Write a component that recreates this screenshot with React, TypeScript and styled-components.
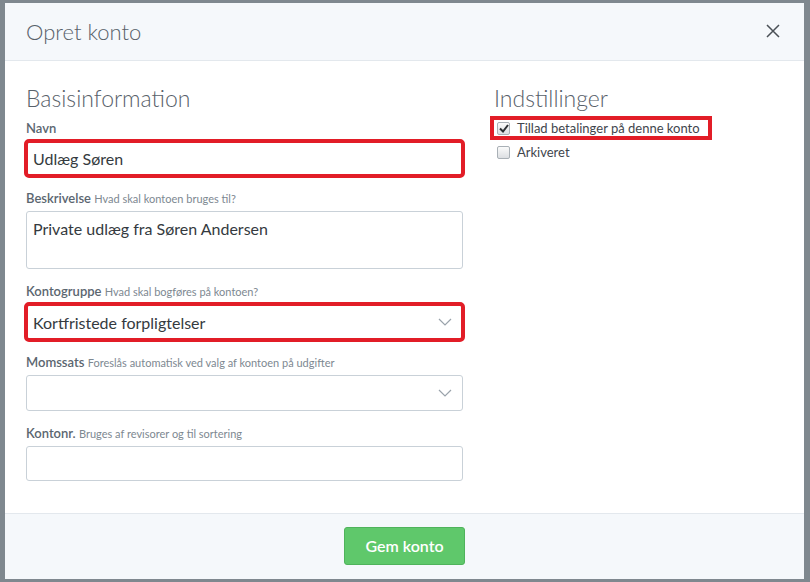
import React from 'react';
import styled, { createGlobalStyle } from 'styled-components';

const GlobalStyle = createGlobalStyle`
  html, body {
    margin: 0;
    padding: 0;
    background: #7f888f;
    font-family: Lato, "Open Sans", "Liberation Sans", sans-serif;
  }
  * { box-sizing: border-box; }
`;

const Backdrop = styled.div`
  width: 810px;
  height: 582px;
  padding: 3px 0 0 5px;
  overflow: hidden;
`;

const Modal = styled.div`
  width: 799px;
  height: 576px;
  background: #ffffff;
  display: flex;
  flex-direction: column;
`;

const Header = styled.div`
  height: 58px;
  background: #f5f8fb;
  border-bottom: 1px solid #e3e8ed;
  display: flex;
  align-items: center;
  justify-content: space-between;
  padding: 0 22px 0 21px;
`;

const Title = styled.h2`
  margin: 0;
  font-size: 22px;
  font-weight: 300;
  color: #58616a;
`;

const CloseButton = styled.button`
  background: none;
  border: none;
  padding: 0;
  width: 16px;
  height: 16px;
  cursor: pointer;
  display: flex;
`;

const Body = styled.div`
  flex: 1;
  display: flex;
  gap: 31px;
  padding: 22px 21px 0 21px;
`;

const LeftColumn = styled.div`
  width: 437px;
`;

const RightColumn = styled.div`
  flex: 1;
`;

const SectionTitle = styled.h3`
  margin: 0 0 6px;
  font-size: 23px;
  line-height: 30px;
  font-weight: 300;
  color: #58616a;
`;

const Group = styled.div`
  margin-bottom: 13px;
`;

const Label = styled.label`
  display: block;
  height: 18px;
  line-height: 18px;
  margin-bottom: 4px;
  font-size: 13px;
  font-weight: 600;
  color: #5b6670;
  white-space: nowrap;
`;

const Hint = styled.span`
  font-size: 11px;
  font-weight: 400;
  color: #7d8891;
`;

const fieldBase = `
  width: 100%;
  display: block;
  border: 1px solid #c9d1d8;
  border-radius: 3px;
  background: #fff;
  font-family: inherit;
  font-size: 16px;
  color: #343a40;
  padding: 0 6px;
`;

const Input = styled.input<{ $marked?: boolean }>`
  ${fieldBase}
  height: 35px;
  outline: ${p => (p.$marked ? '4px solid #e21d27' : 'none')};
  outline-offset: -2px;
`;

const TextArea = styled.textarea`
  ${fieldBase}
  height: 58px;
  padding-top: 7px;
  resize: none;
  outline: none;
`;

const SelectBox = styled.div<{ $marked?: boolean }>`
  ${fieldBase}
  height: 36px;
  display: flex;
  align-items: center;
  justify-content: space-between;
  padding: 0 10px 0 6px;
  outline: ${p => (p.$marked ? '4px solid #e21d27' : 'none')};
  outline-offset: -2px;
`;

const CheckList = styled.div`
  display: flex;
  flex-direction: column;
  align-items: flex-start;
  margin-top: -3px;
`;

const CheckRow = styled.label<{ $marked?: boolean }>`
  display: flex;
  align-items: center;
  gap: 7px;
  height: 24px;
  margin-left: -4px;
  padding: 0 12px 0 7px;
  font-size: 13px;
  color: #3f464d;
  white-space: nowrap;
  outline: ${p => (p.$marked ? '4px solid #e21d27' : 'none')};
  outline-offset: -4px;
`;

const CheckBox = styled.span`
  width: 13px;
  height: 13px;
  border: 1px solid #a9b0b6;
  border-radius: 2px;
  background: linear-gradient(#fbfbfb, #dcdfe2);
  display: flex;
  align-items: center;
  justify-content: center;
  flex-shrink: 0;
`;

const Footer = styled.div`
  height: 66px;
  background: #f5f8fb;
  border-top: 1px solid #e3e8ed;
  display: flex;
  align-items: center;
  justify-content: center;
  padding-bottom: 2px;
`;

const SaveButton = styled.button`
  width: 121px;
  height: 38px;
  background: #5fc86b;
  border: 1px solid #4fb35b;
  border-radius: 3px;
  color: #fff;
  font-family: inherit;
  font-size: 16px;
  font-weight: 600;
  cursor: pointer;
`;

const Chevron = () => (
  <svg width="14" height="8" viewBox="0 0 14 8">
    <path d="M1 1 L7 7 L13 1" fill="none" stroke="#9aa3ab" strokeWidth="1.2" />
  </svg>
);

const App: React.FC = () => (
  <>
    <GlobalStyle />
    <Backdrop>
      <Modal>
        <Header>
          <Title>Opret konto</Title>
          <CloseButton aria-label="Luk">
            <svg width="14" height="14" viewBox="0 0 14 14">
              <path d="M1 1 L13 13 M13 1 L1 13" stroke="#4a5056" strokeWidth="1.5" />
            </svg>
          </CloseButton>
        </Header>
        <Body>
          <LeftColumn>
            <SectionTitle>Basisinformation</SectionTitle>
            <Group>
              <Label>Navn</Label>
              <Input $marked defaultValue="Udlæg Søren" />
            </Group>
            <Group>
              <Label>
                Beskrivelse <Hint>Hvad skal kontoen bruges til?</Hint>
              </Label>
              <TextArea defaultValue="Private udlæg fra Søren Andersen" />
            </Group>
            <Group>
              <Label>
                Kontogruppe <Hint>Hvad skal bogføres på kontoen?</Hint>
              </Label>
              <SelectBox $marked>
                <span>Kortfristede forpligtelser</span>
                <Chevron />
              </SelectBox>
            </Group>
            <Group>
              <Label>
                Momssats <Hint>Foreslås automatisk ved valg af kontoen på udgifter</Hint>
              </Label>
              <SelectBox>
                <span />
                <Chevron />
              </SelectBox>
            </Group>
            <Group>
              <Label>
                Kontonr. <Hint>Bruges af revisorer og til sortering</Hint>
              </Label>
              <Input />
            </Group>
          </LeftColumn>
          <RightColumn>
            <SectionTitle>Indstillinger</SectionTitle>
            <CheckList>
              <CheckRow $marked>
                <CheckBox>
                  <svg width="10" height="9" viewBox="0 0 10 9">
                    <path d="M1 4.5 L4 7.5 L9 1" fill="none" stroke="#2b2f33" strokeWidth="2" />
                  </svg>
                </CheckBox>
                Tillad betalinger på denne konto
              </CheckRow>
              <CheckRow>
                <CheckBox />
                Arkiveret
              </CheckRow>
            </CheckList>
          </RightColumn>
        </Body>
        <Footer>
          <SaveButton>Gem konto</SaveButton>
        </Footer>
      </Modal>
    </Backdrop>
  </>
);

export default App;
